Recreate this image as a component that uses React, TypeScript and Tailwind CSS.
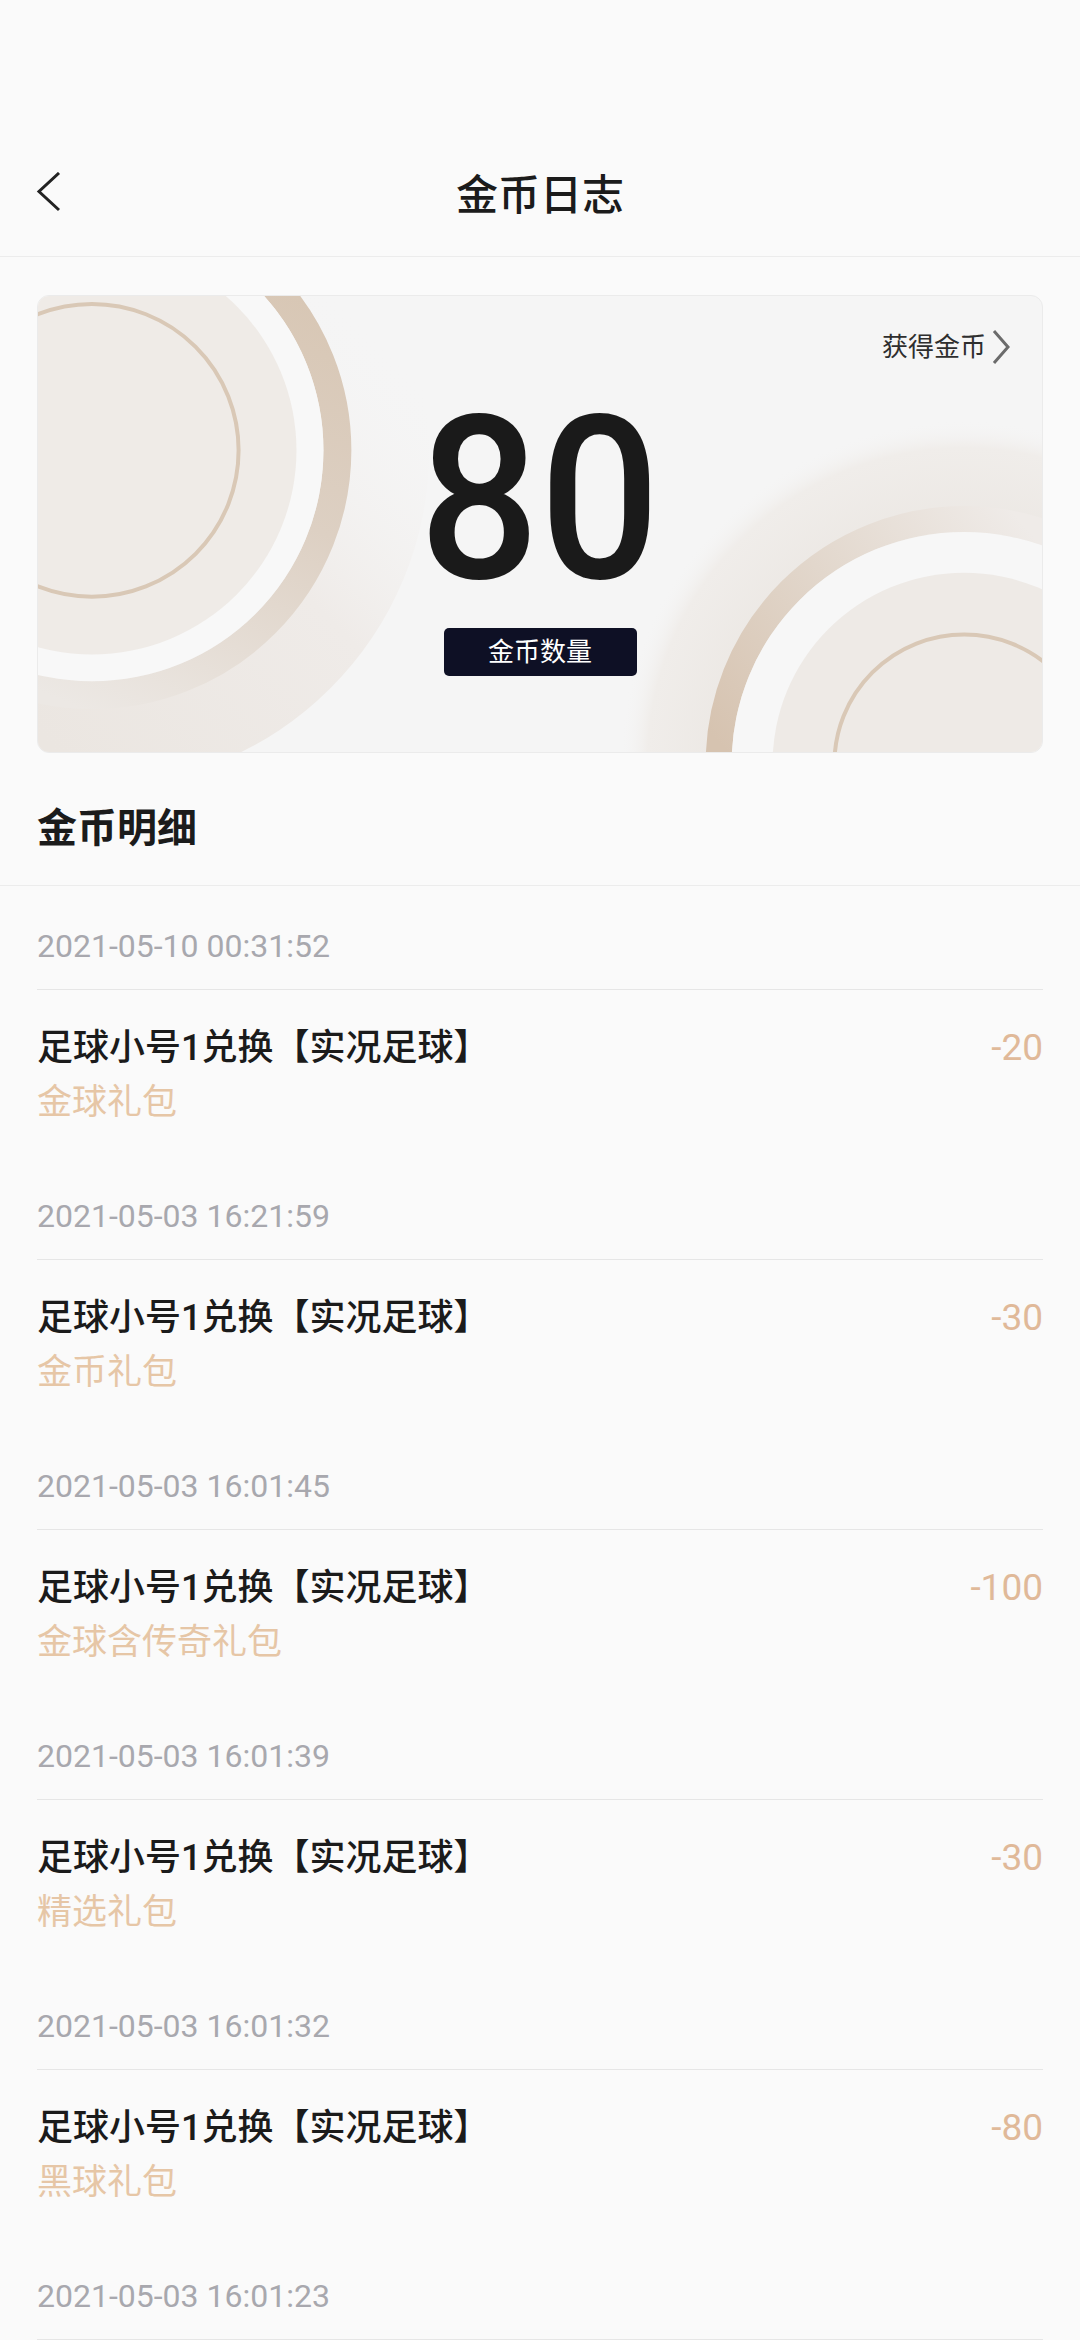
import React from "react";

const records = [
  { time: "2021-05-10 00:31:52", title: "足球小号1兑换【实况足球】", gift: "金球礼包", amount: "-20" },
  { time: "2021-05-03 16:21:59", title: "足球小号1兑换【实况足球】", gift: "金币礼包", amount: "-30" },
  { time: "2021-05-03 16:01:45", title: "足球小号1兑换【实况足球】", gift: "金球含传奇礼包", amount: "-100" },
  { time: "2021-05-03 16:01:39", title: "足球小号1兑换【实况足球】", gift: "精选礼包", amount: "-30" },
  { time: "2021-05-03 16:01:32", title: "足球小号1兑换【实况足球】", gift: "黑球礼包", amount: "-80" },
];

function CardArt() {
  return (
    <svg className="absolute inset-0 h-full w-full" viewBox="0 0 1006 458" preserveAspectRatio="none">
      <defs>
        <linearGradient id="haloL" x1="20" y1="458" x2="390" y2="90" gradientUnits="userSpaceOnUse">
          <stop offset="0" stopColor="#ebe6e1" />
          <stop offset="0.55" stopColor="#efebe8" />
          <stop offset="1" stopColor="#f5f5f5" stopOpacity="0" />
        </linearGradient>
        <linearGradient id="ringL" x1="260" y1="0" x2="80" y2="430" gradientUnits="userSpaceOnUse">
          <stop offset="0" stopColor="#d8c7b5" />
          <stop offset="0.45" stopColor="#ddd0c3" />
          <stop offset="1" stopColor="#ece8e4" />
        </linearGradient>
        <radialGradient id="haloR" cx="928" cy="470" r="345" gradientUnits="userSpaceOnUse">
          <stop offset="0.7" stopColor="#ece8e4" />
          <stop offset="0.92" stopColor="#f0edea" />
          <stop offset="1" stopColor="#f5f5f5" stopOpacity="0" />
        </radialGradient>
        <linearGradient id="ringR" x1="690" y1="458" x2="980" y2="220" gradientUnits="userSpaceOnUse">
          <stop offset="0" stopColor="#d6c3b0" />
          <stop offset="0.5" stopColor="#e2d7cc" />
          <stop offset="1" stopColor="#efebe8" />
        </linearGradient>
      </defs>

      {/* left circles */}
      <circle cx="54" cy="155" r="338" fill="url(#haloL)" />
      <circle cx="54" cy="155" r="246" fill="none" stroke="url(#ringL)" strokeWidth="28" />
      <circle cx="54" cy="155" r="232" fill="#f8f8f8" />
      <circle cx="54" cy="155" r="205" fill="#efebe7" />
      <circle cx="54" cy="155" r="147" fill="none" stroke="#d9c8b6" strokeWidth="4" />

      {/* right circles */}
      <circle cx="928" cy="470" r="345" fill="url(#haloR)" />
      <circle cx="928" cy="470" r="246" fill="none" stroke="url(#ringR)" strokeWidth="26" />
      <circle cx="928" cy="470" r="233" fill="#f7f7f7" />
      <circle cx="928" cy="470" r="192" fill="#eeeae6" />
      <circle cx="928" cy="470" r="130" fill="none" stroke="#d9c8b6" strokeWidth="4" />
    </svg>
  );
}

export default function App() {
  return (
    <div
      className="h-[2340px] w-[1080px] overflow-hidden bg-[#fafafa] text-[#1b1b1b]"
      style={{ fontFamily: "Roboto, 'Noto Sans CJK SC', sans-serif" }}
    >
      {/* status bar space */}
      <div className="h-[130px]" />

      {/* nav bar */}
      <div className="relative flex h-[127px] items-center justify-center border-b border-[#ececec] pt-[6px]">
        <svg className="absolute left-[36px] top-[42px] h-[40px] w-[26px]" viewBox="0 0 26 40">
          <polyline points="23,1 3,19.5 23,38" fill="none" stroke="#222" strokeWidth="3" strokeLinejoin="miter" />
        </svg>
        <span className="text-[42px] font-medium leading-none">金币日志</span>
      </div>

      {/* balance card */}
      <div className="px-[37px] pt-[38px]">
        <div className="relative h-[458px] overflow-hidden rounded-[12px] border border-[#ebebeb] bg-[#f5f5f5]">
          <CardArt />
          <div className="relative flex h-full flex-col items-center">
            <div className="flex w-full justify-end pr-[32px] pt-[34px]">
              <div className="flex h-[34px] items-center gap-[6px]">
                <span className="text-[26px] leading-none text-[#2e2e2e]">获得金币</span>
                <svg className="h-[34px] w-[18px]" viewBox="0 0 18 34">
                  <polyline points="2,1 16,17 2,33" fill="none" stroke="#6b6b6b" strokeWidth="3" />
                </svg>
              </div>
            </div>
            <div className="mt-[22px] inline-block h-[228px] scale-x-[0.93] text-[228px] font-medium leading-[228px] text-[#1a1a1a]">
              80
            </div>
            <div className="mt-[14px] flex h-[48px] w-[193px] items-center justify-center rounded-[5px] bg-[#0e1025] text-[26px] text-white">
              金币数量
            </div>
          </div>
        </div>
      </div>

      {/* detail heading */}
      <div className="border-b border-[#ececec] px-[37px] pb-[28px] pt-[48px]">
        <h2 className="text-[40px] font-bold leading-[56px]">金币明细</h2>
      </div>

      {/* records */}
      <div className="px-[37px]">
        {records.map((r) => (
          <div key={r.time}>
            <div className="border-b border-[#e6e6e6] pb-[25px] pt-[43px]">
              <span className="text-[32px] leading-[34px] text-[#a8a8ae]">{r.time}</span>
            </div>
            <div className="flex items-start justify-between pb-[30px] pt-[35px]">
              <div className="flex flex-col gap-[9px]">
                <span className="text-[36px] font-medium leading-[46px] text-[#1b1b1b]">{r.title}</span>
                <span className="text-[35px] leading-[46px] text-[#e6c6a6]">{r.gift}</span>
              </div>
              <span className="text-[37px] leading-[46px] text-[#e0b999]">{r.amount}</span>
            </div>
          </div>
        ))}
        <div className="border-b border-[#e6e6e6] pb-[25px] pt-[43px]">
          <span className="text-[32px] leading-[34px] text-[#a8a8ae]">2021-05-03 16:01:23</span>
        </div>
      </div>
    </div>
  );
}
